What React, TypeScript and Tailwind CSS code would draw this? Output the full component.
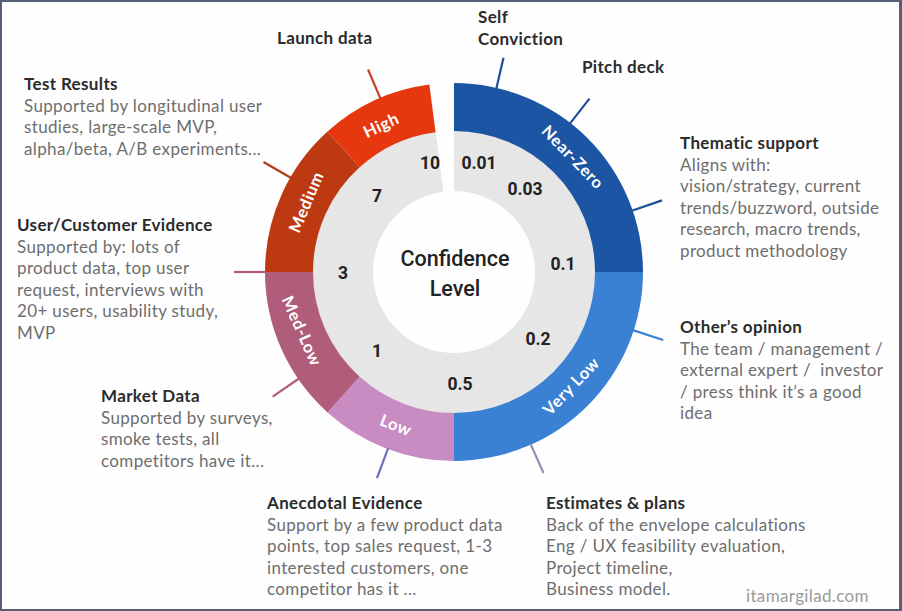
import React from "react";

const CX = 454;
const CY = 272;
const R_OUT = 189;
const R_IN = 141;
const R_CORE = 81;

function pt(r: number, a: number): [number, number] {
  const rad = (a * Math.PI) / 180;
  return [CX + r * Math.sin(rad), CY - r * Math.cos(rad)];
}

function sector(r1: number, r2: number, a0: number, a1: number): string {
  const large = a1 - a0 > 180 ? 1 : 0;
  const [x0, y0] = pt(r2, a0);
  const [x1, y1] = pt(r2, a1);
  const [x2, y2] = pt(r1, a1);
  const [x3, y3] = pt(r1, a0);
  return `M ${x0} ${y0} A ${r2} ${r2} 0 ${large} 1 ${x1} ${y1} L ${x2} ${y2} A ${r1} ${r1} 0 ${large} 0 ${x3} ${y3} Z`;
}

const segments = [
  { a0: 0, a1: 90, color: "#1b55a3" },
  { a0: 90, a1: 180, color: "#3a80d3" },
  { a0: 180, a1: 222, color: "#c88bc2" },
  { a0: 222, a1: 270, color: "#b05d7c" },
  { a0: 270, a1: 318, color: "#bd3912" },
  { a0: 318, a1: 352.5, color: "#e6370f" },
];

const ticks = [
  { a: 13, color: "#1b4f99" },
  { a: 38, color: "#1b4f99" },
  { a: 71, color: "#1b4f99" },
  { a: 108, color: "#3a80d3" },
  { a: 156, color: "#9390b2" },
  { a: 200.5, color: "#6b6fb8" },
  { a: 235.5, color: "#b05d7c" },
  { a: 270, color: "#b05d7c" },
  { a: 300, color: "#b3391a" },
  { a: 337, color: "#c8402c" },
];

const segLabels = [
  { t: "High", x: 381, y: 125, r: -25 },
  { t: "Medium", x: 306, y: 202, r: -67 },
  { t: "Med-Low", x: 302, y: 331, r: 66 },
  { t: "Low", x: 396, y: 425, r: 21 },
  { t: "Very Low", x: 571, y: 386, r: -46 },
  { t: "Near-Zero", x: 573, y: 157, r: 46 },
];

const numbers = [
  { t: "10", x: 430, y: 163 },
  { t: "0.01", x: 479, y: 163 },
  { t: "0.03", x: 525, y: 189 },
  { t: "0.1", x: 563, y: 264 },
  { t: "0.2", x: 538, y: 339 },
  { t: "0.5", x: 460, y: 384 },
  { t: "1", x: 377, y: 351 },
  { t: "3", x: 343, y: 273 },
  { t: "7", x: 377, y: 196 },
];

type Note = {
  left: number;
  top: number;
  title: string[];
  body?: string[];
};

const notes: Note[] = [
  { left: 277, top: 27, title: ["Launch data"] },
  { left: 478, top: 6, title: ["Self", "Conviction"] },
  { left: 582, top: 56, title: ["Pitch deck"] },
  {
    left: 24,
    top: 73,
    title: ["Test Results"],
    body: [
      "Supported by longitudinal user",
      "studies, large-scale MVP,",
      "alpha/beta, A/B experiments...",
    ],
  },
  {
    left: 17,
    top: 214,
    title: ["User/Customer Evidence"],
    body: [
      "Supported by: lots of",
      "product data, top user",
      "request, interviews with",
      "20+ users, usability study,",
      "MVP",
    ],
  },
  {
    left: 101,
    top: 385,
    title: ["Market Data"],
    body: ["Supported by surveys,", "smoke tests, all", "competitors have it..."],
  },
  {
    left: 267,
    top: 492,
    title: ["Anecdotal Evidence"],
    body: [
      "Support by a few product data",
      "points, top sales request, 1-3",
      "interested customers, one",
      "competitor has it ...",
    ],
  },
  {
    left: 546,
    top: 492,
    title: ["Estimates & plans"],
    body: [
      "Back of the envelope calculations",
      "Eng / UX feasibility evaluation,",
      "Project timeline,",
      "Business model.",
    ],
  },
  {
    left: 680,
    top: 316,
    title: ["Other\u2019s opinion"],
    body: [
      "The team / management /",
      "external expert /\u00a0 investor",
      "/ press think it\u2019s a good",
      "idea",
    ],
  },
  {
    left: 680,
    top: 132,
    title: ["Thematic support"],
    body: [
      "Aligns with:",
      "vision/strategy, current",
      "trends/buzzword, outside",
      "research, macro trends,",
      "product methodology",
    ],
  },
];

function NoteBlock({ n }: { n: Note }) {
  return (
    <div
      className="absolute whitespace-nowrap text-[17px] leading-[21.6px] tracking-[0.35px] [font-family:Lato,'Noto_Sans',sans-serif]"
      style={{ left: n.left, top: n.top }}
    >
      {n.title.map((t) => (
        <div key={t} className="font-bold text-[#2b2b2b]">
          {t}
        </div>
      ))}
      {n.body?.map((t) => (
        <div key={t} className="text-[#6e6e6e]">
          {t}
        </div>
      ))}
    </div>
  );
}

export default function App() {
  return (
    <div className="relative w-[902px] h-[611px] overflow-hidden bg-[#fefefe]">
      <svg
        className="absolute left-0 top-0"
        width={902}
        height={611}
        viewBox="0 0 902 611"
      >
        <path d={sector(R_CORE, R_IN + 1, 0, 352.5)} fill="#e6e6e6" />
        {segments.map((s) => (
          <path key={s.a0} d={sector(R_IN, R_OUT, s.a0, s.a1)} fill={s.color} />
        ))}
        {ticks.map((t) => {
          const [x1, y1] = pt(R_OUT - 1, t.a);
          const [x2, y2] = pt(R_OUT + 31, t.a);
          return (
            <line
              key={t.a}
              x1={x1}
              y1={y1}
              x2={x2}
              y2={y2}
              stroke={t.color}
              strokeWidth={2.2}
            />
          );
        })}
        {segLabels.map((l) => (
          <text
            key={l.t}
            x={l.x}
            y={l.y}
            textAnchor="middle"
            dominantBaseline="central"
            transform={`rotate(${l.r} ${l.x} ${l.y})`}
            fill="#ffffff"
            fontFamily="Lato, 'Noto Sans', sans-serif"
            fontWeight={700}
            fontSize={16.5}
            letterSpacing={0.6}
          >
            {l.t}
          </text>
        ))}
        {numbers.map((n) => (
          <text
            key={n.t}
            x={n.x}
            y={n.y}
            textAnchor="middle"
            dominantBaseline="central"
            fill="#222222"
            fontFamily="Roboto, 'Liberation Sans', sans-serif"
            fontWeight={700}
            fontSize={17.5}
          >
            {n.t}
          </text>
        ))}
        <text
          x={CX + 1}
          y={258}
          textAnchor="middle"
          dominantBaseline="central"
          fill="#222222"
          fontFamily="Roboto, 'Liberation Sans', sans-serif"
          fontWeight={500}
          fontSize={21.5}
        >
          Confidence
        </text>
        <text
          x={CX + 1}
          y={288}
          textAnchor="middle"
          dominantBaseline="central"
          fill="#222222"
          fontFamily="Roboto, 'Liberation Sans', sans-serif"
          fontWeight={500}
          fontSize={21.5}
        >
          Level
        </text>
      </svg>

      {notes.map((n) => (
        <NoteBlock key={n.title[0]} n={n} />
      ))}

      <div className="absolute left-[746px] top-[585px] whitespace-nowrap text-[17px] leading-[21.6px] tracking-[0.35px] text-[#9a9a9a] [font-family:Lato,'Noto_Sans',sans-serif]">
        itamargilad.com
      </div>

      <div className="pointer-events-none absolute inset-0 border-t-2 border-l-2 border-b-2 border-r-[3px] border-[#585d78]" />
    </div>
  );
}
